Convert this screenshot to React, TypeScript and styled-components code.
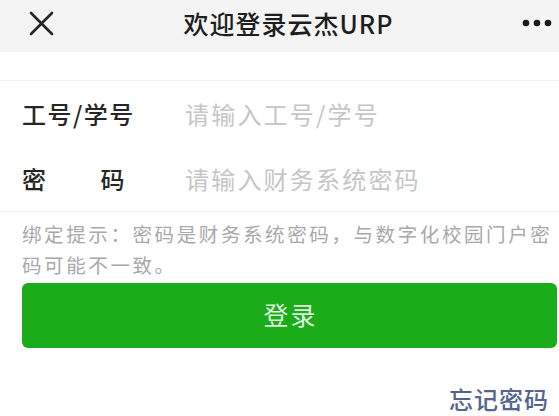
import React from "react";
import styled, { createGlobalStyle } from "styled-components";

const GlobalStyle = createGlobalStyle`
  html, body {
    margin: 0;
    padding: 0;
    background: #ffffff;
  }
  body {
    font-family: "Noto Sans CJK SC", "Noto Sans", "Liberation Sans", sans-serif;
    width: 559px;
    height: 416px;
    overflow: hidden;
  }
`;

const Page = styled.div`
  display: flex;
  flex-direction: column;
  width: 559px;
  height: 416px;
  background: #fff;
`;

const NavBar = styled.header`
  display: grid;
  grid-template-columns: 1fr auto 1fr;
  align-items: center;
  height: 54px;
  background: #f4f4f4;
`;

const NavLeft = styled.div`
  display: flex;
  align-items: center;
  padding-left: 29px;
  padding-bottom: 5px;
`;

const NavRight = styled.div`
  display: flex;
  justify-content: flex-end;
  align-items: center;
  padding-right: 4px;
  padding-bottom: 6px;
`;

const Title = styled.h1`
  margin: 0;
  padding-left: 18px;
  padding-bottom: 6px;
  font-size: 25px;
  font-weight: 500;
  letter-spacing: 1px;
  color: #1e1e1e;
`;

const Cells = styled.section`
  margin-top: 28px;
  border-top: 1px solid #f3f3f3;
  border-bottom: 1px solid #f0f0f0;
`;

const Cell = styled.div`
  display: flex;
  align-items: center;
  height: 65px;
  padding-left: 22px;
`;

const Label = styled.label`
  display: flex;
  width: 163px;
  flex-shrink: 0;
  font-size: 24px;
  letter-spacing: 1.5px;
  color: #262626;
  font-weight: 500;
`;

const Spread = styled.span<{ $gap: number }>`
  margin-right: ${(p) => p.$gap}px;
`;

const Input = styled.input`
  flex: 1;
  min-width: 0;
  border: none;
  outline: none;
  padding: 0;
  background: transparent;
  font-family: inherit;
  font-size: 24px;
  letter-spacing: 2.2px;
  color: #333;
  &::placeholder {
    color: #c6c6c6;
  }
`;

const Hint = styled.p`
  margin: 6px 0 0;
  padding: 0 4px 0 22px;
  font-size: 19.5px;
  line-height: 31px;
  letter-spacing: 2.6px;
  color: #a9a9a9;
`;

const ButtonArea = styled.div`
  padding: 3px 2px 0 22px;
`;

const PrimaryButton = styled.button`
  display: flex;
  align-items: center;
  justify-content: center;
  width: 100%;
  height: 65px;
  border: none;
  border-radius: 6px;
  background: #1aad19;
  font-family: inherit;
  font-size: 25px;
  letter-spacing: 2px;
  color: rgba(255, 255, 255, 0.88);
  padding: 0 0 4px 2px;
`;

const Footer = styled.div`
  display: flex;
  justify-content: flex-end;
  padding: 33px 10px 0 0;
`;

const Link = styled.a`
  font-size: 24px;
  font-weight: 500;
  letter-spacing: 1px;
  color: #55648f;
  text-decoration: none;
`;

const CloseIcon = () => (
  <svg width="25" height="25" viewBox="0 0 25 25" aria-hidden="true">
    <path d="M2 2 L23 23 M23 2 L2 23" stroke="#262626" strokeWidth="2.6" strokeLinecap="round" />
  </svg>
);

const MoreIcon = () => (
  <svg width="34" height="10" viewBox="0 0 34 10" aria-hidden="true">
    <circle cx="5" cy="5" r="3.3" fill="#1a1a1a" />
    <circle cx="16" cy="5" r="3.3" fill="#1a1a1a" />
    <circle cx="27" cy="5" r="3.3" fill="#1a1a1a" />
  </svg>
);

export default function App() {
  return (
    <>
      <GlobalStyle />
      <Page>
        <NavBar>
          <NavLeft>
            <CloseIcon />
          </NavLeft>
          <Title>欢迎登录云杰URP</Title>
          <NavRight>
            <MoreIcon />
          </NavRight>
        </NavBar>
        <Cells>
          <Cell>
            <Label>工号/学号</Label>
            <Input placeholder="请输入工号/学号" />
          </Cell>
          <Cell>
            <Label>
              <Spread $gap={53}>密</Spread>
              <span>码</span>
            </Label>
            <Input type="password" placeholder="请输入财务系统密码" />
          </Cell>
        </Cells>
        <Hint>绑定提示：密码是财务系统密码，与数字化校园门户密码可能不一致。</Hint>
        <ButtonArea>
          <PrimaryButton>登录</PrimaryButton>
        </ButtonArea>
        <Footer>
          <Link href="#">忘记密码</Link>
        </Footer>
      </Page>
    </>
  );
}
